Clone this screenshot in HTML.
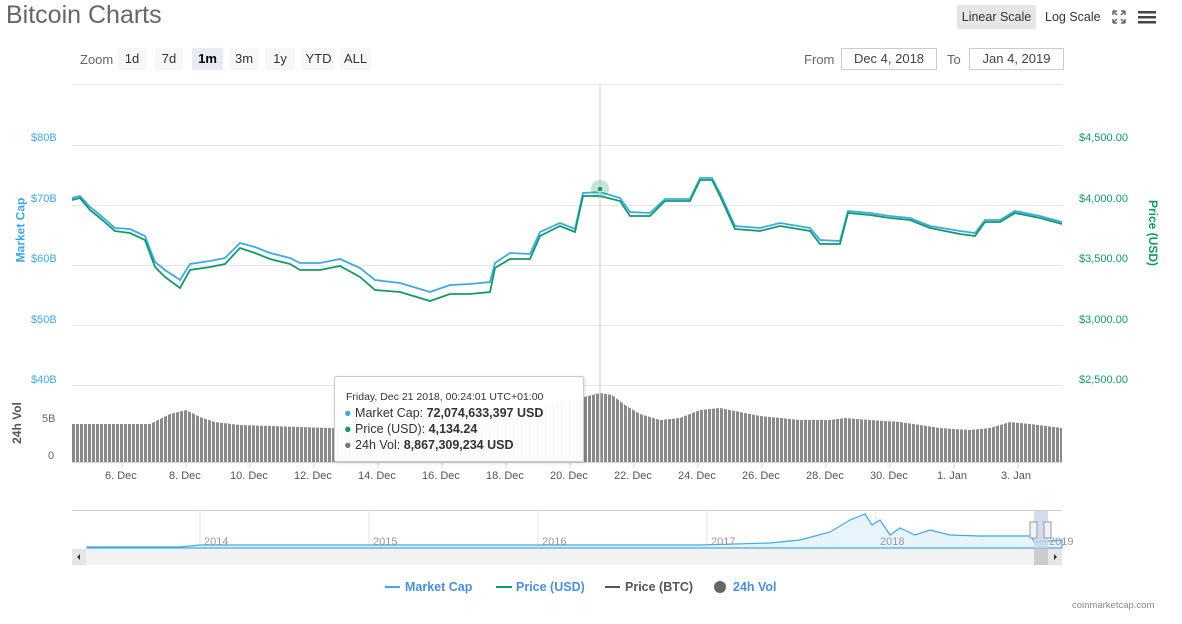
<!DOCTYPE html>
<html><head><meta charset="utf-8"><style>
body{margin:0;width:1182px;height:624px;background:#fff;font-family:"Liberation Sans",sans-serif;position:relative;overflow:hidden}
.a{position:absolute;white-space:nowrap}
.btn{position:absolute;top:48px;height:22px;line-height:22px;background:#f7f7f7;border-radius:2px;font-size:13px;color:#333;text-align:center}
.ax{font-size:11px;position:absolute}
.in{position:absolute;top:48px;height:20px;border:1px solid #ccc;font-size:13px;color:#444;line-height:20px;text-align:center}
</style></head><body>
<div class="a" style="left:6px;top:1px;font-size:25px;color:#666">Bitcoin Charts</div>
<div class="a" style="left:957px;top:5px;width:79px;height:24px;background:#e6e6e6;font-size:12.5px;line-height:24px;text-align:center;color:#333">Linear Scale</div>
<div class="a" style="left:1045px;top:10px;font-size:12.5px;color:#333">Log Scale</div>
<svg class="a" style="left:1111px;top:9px" width="48" height="16"><g stroke="#666" stroke-width="1.5" fill="none"><path d="M2 2h4M2 2v4M14 2h-4M14 2v4M2 14h4M2 14v-4M14 14h-4M14 14v-4M2 2l4 4M14 2l-4 4M2 14l4-4M14 14l-4-4"/></g><g fill="#444"><rect x="27" y="2" width="18" height="2.5"/><rect x="27" y="7" width="18" height="2.5"/><rect x="27" y="12" width="18" height="2.5"/></g></svg>
<div class="a" style="left:80px;top:52px;font-size:13px;color:#666">Zoom</div>
<div class="btn" style="left:118px;width:28px">1d</div>
<div class="btn" style="left:155px;width:28px">7d</div>
<div class="btn" style="left:192px;width:31px;background:#e6ebf5;font-weight:bold;color:#000">1m</div>
<div class="btn" style="left:230px;width:28px">3m</div>
<div class="btn" style="left:265px;width:30px">1y</div>
<div class="btn" style="left:302px;width:33px">YTD</div>
<div class="btn" style="left:340px;width:31px">ALL</div>
<div class="a" style="left:804px;top:52px;font-size:13px;color:#666">From</div>
<div class="in" style="left:841px;width:94px">Dec 4, 2018</div>
<div class="a" style="left:947px;top:52px;font-size:13px;color:#666">To</div>
<div class="in" style="left:969px;width:93px">Jan 4, 2019</div>
<div class="ax" style="left:31px;top:132px;color:#3fa9e6">$80B</div>
<div class="ax" style="left:31px;top:193px;color:#3fa9e6">$70B</div>
<div class="ax" style="left:31px;top:253px;color:#3fa9e6">$60B</div>
<div class="ax" style="left:31px;top:314px;color:#3fa9e6">$50B</div>
<div class="ax" style="left:31px;top:374px;color:#3fa9e6">$40B</div>
<div class="ax" style="left:1079px;top:132px;color:#119b6a">$4,500.00</div>
<div class="ax" style="left:1079px;top:193px;color:#119b6a">$4,000.00</div>
<div class="ax" style="left:1079px;top:253px;color:#119b6a">$3,500.00</div>
<div class="ax" style="left:1079px;top:314px;color:#119b6a">$3,000.00</div>
<div class="ax" style="left:1079px;top:374px;color:#119b6a">$2,500.00</div>
<div class="a" style="left:-12px;top:223px;transform:rotate(-90deg);font-size:12px;font-weight:bold;color:#3fa9e6">Market Cap</div>
<div class="a" style="left:1120px;top:226px;transform:rotate(90deg);font-size:12px;font-weight:bold;color:#119b6a">Price (USD)</div>
<div class="a" style="left:-4px;top:416px;transform:rotate(-90deg);font-size:12px;font-weight:bold;color:#555">24h Vol</div>
<div class="ax" style="left:42px;top:413px;color:#666">5B</div>
<div class="ax" style="left:48px;top:450px;color:#666">0</div>
<svg class="a" style="left:0;top:0" width="1182" height="624">
<defs><pattern id="st" width="4" height="10" patternUnits="userSpaceOnUse"><rect width="3" height="10" fill="#8a8a8a"/></pattern></defs>
<g stroke="#e6e6e6" stroke-width="1"><path d="M72 84.5H1062M72 145.5H1062M72 205.5H1062M72 265.5H1062M72 325.5H1062M72 385.5H1062"/></g>
<polygon fill="url(#st)" points="72,424 150,424 170,414 186,410 200,417 215,422 240,425 300,427 330,428 360,429 420,430 460,428 480,426 500,424 520,418 540,410 560,402 580,398 600,393 612,395 625,405 640,414 660,420 680,418 700,410 720,408 740,412 760,416 780,418 800,420 830,420 845,418 870,420 900,422 940,428 970,430 990,428 1010,422 1030,424 1062,428 1062,462 72,462"/>
<line x1="72" y1="462.5" x2="1062" y2="462.5" stroke="#ccd6eb"/>
<g stroke="#ccd6eb"><path d="M122 462v6M186 462v6M250 462v6M314 462v6M378 462v6M442 462v6M506 462v6M570 462v6M634 462v6M698 462v6M762 462v6M826 462v6M890 462v6M954 462v6M1018 462v6"/></g>
<polyline fill="none" stroke="#3fa9e6" stroke-width="1.8" points="72,198 80,196 90,207 100,215 115,228 130,229 145,236 155,262 165,270 180,280 190,264 210,261 225,258 240,243 255,247 270,253 290,258 300,263 320,263 340,259 360,268 375,280 400,283 420,289 430,292 450,285 470,284 490,282 495,263 510,253 530,254 540,232 560,223 575,229 583,193 600,192 620,198 630,212 650,213 665,199 690,199 700,178 712,178 720,193 735,226 760,228 780,223 810,228 820,240 840,241 848,211 870,213 890,216 910,218 930,226 960,231 975,233 985,220 1000,220 1015,211 1040,216 1062,222"/>
<polyline fill="none" stroke="#119b6a" stroke-width="1.8" points="72,200 80,198 90,210 100,218 115,231 130,233 145,240 155,267 165,277 180,288 190,270 210,267 225,264 240,248 255,253 270,259 290,264 300,270 320,270 340,266 360,277 375,290 400,292 420,298 430,301 450,294 470,294 490,292 495,268 510,259 530,259 540,236 560,226 575,232 583,196 600,196 620,201 630,216 650,216 665,201 690,201 700,180 712,180 720,196 735,229 760,231 780,226 810,231 820,244 840,244 848,213 870,215 890,218 910,220 930,228 960,234 975,236 985,222 1000,222 1015,213 1040,218 1062,224"/>
<line x1="600" y1="84" x2="600" y2="462" stroke="#ccc"/>
<circle cx="600" cy="189" r="9" fill="#119b6a" opacity=".25"/>
<circle cx="600" cy="189" r="3" fill="#119b6a" stroke="#fff"/>
<line x1="72" y1="510.5" x2="1062" y2="510.5" stroke="#ccc"/>
<g stroke="#e6e6e6"><path d="M200 510v38M369 510v38M538 510v38M707 510v38M876 510v38"/></g>
<path d="M87 547 L180 547 L200 545 L700 545 L770 543 L800 540 L830 532 L850 520 L865 514 L872 525 L880 520 L890 535 L900 528 L915 535 L930 530 L950 535 L980 536 L1030 536 L1035 542 L1062 540 L1062 548 L87 548Z" fill="#e8f4fc" stroke="#3fa9e6" stroke-width="1.2"/>
<rect x="1034" y="510" width="14" height="38" fill="#c7d3ea" opacity=".8"/>
<rect x="1030" y="522" width="7" height="16" fill="#f2f2f2" stroke="#999"/>
<rect x="1044" y="522" width="7" height="16" fill="#f2f2f2" stroke="#999"/>
<rect x="72" y="549" width="990" height="16" fill="#f2f2f2"/>
<rect x="72" y="549" width="14" height="16" fill="#e6e6e6"/>
<rect x="1048" y="549" width="14" height="16" fill="#e6e6e6"/>
<rect x="1034" y="549" width="14" height="16" fill="#ccc"/>
<path d="M77 557l3-3v6zM1057 557l-3-3v6z" fill="#333"/>
<line x1="385" y1="587" x2="400" y2="587" stroke="#3fa9e6" stroke-width="2"/>
<line x1="496" y1="587" x2="512" y2="587" stroke="#119b6a" stroke-width="2"/>
<line x1="605" y1="587" x2="620" y2="587" stroke="#555" stroke-width="2"/>
<circle cx="720" cy="587" r="6" fill="#666"/>
</svg>
<div class="a" style="left:204px;top:536px;font-size:11px;color:#999">2014</div>
<div class="a" style="left:373px;top:536px;font-size:11px;color:#999">2015</div>
<div class="a" style="left:542px;top:536px;font-size:11px;color:#999">2016</div>
<div class="a" style="left:711px;top:536px;font-size:11px;color:#999">2017</div>
<div class="a" style="left:880px;top:536px;font-size:11px;color:#999">2018</div>
<div class="a" style="left:1049px;top:536px;font-size:11px;color:#999">2019</div>
<div class="a" style="left:0;top:470px;font-size:11px;color:#555;width:1182px;height:14px">
<span class="a" style="left:105px">6. Dec</span><span class="a" style="left:169px">8. Dec</span><span class="a" style="left:230px">10. Dec</span><span class="a" style="left:294px">12. Dec</span><span class="a" style="left:358px">14. Dec</span><span class="a" style="left:422px">16. Dec</span><span class="a" style="left:486px">18. Dec</span><span class="a" style="left:550px">20. Dec</span><span class="a" style="left:614px">22. Dec</span><span class="a" style="left:678px">24. Dec</span><span class="a" style="left:742px">26. Dec</span><span class="a" style="left:806px">28. Dec</span><span class="a" style="left:870px">30. Dec</span><span class="a" style="left:937px">1. Jan</span><span class="a" style="left:1001px">3. Jan</span></div>
<div class="a" style="left:334px;top:376px;width:248px;height:84px;background:rgba(255,255,255,.96);border:1px solid #ccc;border-radius:2px;box-shadow:1px 1px 3px rgba(0,0,0,.15)">
<div class="a" style="left:11px;top:14px;font-size:10.5px;color:#333">Friday, Dec 21 2018, 00:24:01 UTC+01:00</div>
<div class="a" style="left:9px;top:29px;font-size:12.5px;color:#333"><span style="color:#3fa9e6">●</span> Market Cap: <b>72,074,633,397 USD</b></div>
<div class="a" style="left:9px;top:45px;font-size:12.5px;color:#333"><span style="color:#119b6a">●</span> Price (USD): <b>4,134.24</b></div>
<div class="a" style="left:9px;top:61px;font-size:12.5px;color:#333"><span style="color:#777">●</span> 24h Vol: <b>8,867,309,234 USD</b></div>
</div>
<div class="a" style="left:405px;top:580px;font-size:12.5px;font-weight:bold;color:#4a90d9">Market Cap</div>
<div class="a" style="left:516px;top:580px;font-size:12.5px;font-weight:bold;color:#4a90d9">Price (USD)</div>
<div class="a" style="left:625px;top:580px;font-size:12.5px;font-weight:bold;color:#555">Price (BTC)</div>
<div class="a" style="left:733px;top:580px;font-size:12.5px;font-weight:bold;color:#4a90d9">24h Vol</div>
<div class="a" style="left:1072px;top:600px;font-size:9.5px;color:#888">coinmarketcap.com</div>
</body></html>
